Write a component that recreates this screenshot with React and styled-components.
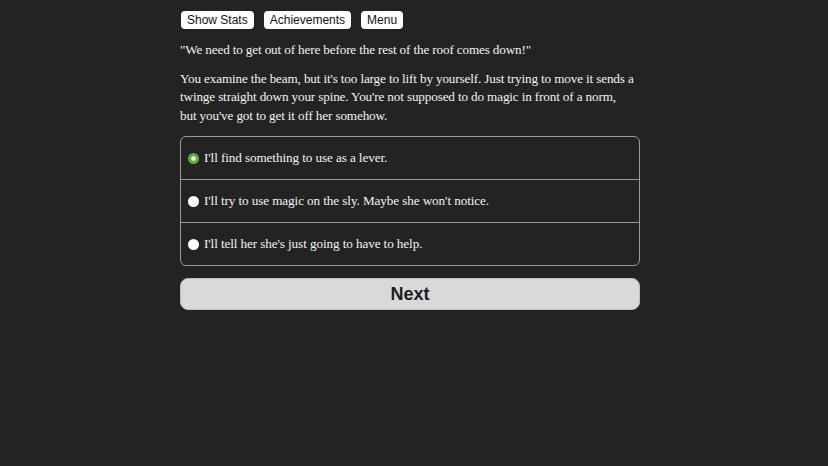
import React, { useState } from "react";
import styled, { createGlobalStyle } from "styled-components";

const GlobalStyle = createGlobalStyle`
  html, body {
    margin: 0;
    background: #232323;
  }
  body {
    font-family: "Liberation Serif", serif;
  }
`;

const choices = [
  "I'll find something to use as a lever.",
  "I'll try to use magic on the sly. Maybe she won't notice.",
  "I'll tell her she's just going to have to help.",
];

const App = () => {
  const [selected, setSelected] = useState(0);

  return (
    <>
      <GlobalStyle />
      <PageLayout>
        <Column>
          <Toolbar>
            <ToolButton>Show Stats</ToolButton>
            <ToolButton>Achievements</ToolButton>
            <ToolButton>Menu</ToolButton>
          </Toolbar>
          <Passage>
            "We need to get out of here before the rest of the roof comes down!"
          </Passage>
          <Passage>
            You examine the beam, but it's too large to lift by yourself. Just
            trying to move it sends a twinge straight down your spine. You're
            not supposed to do magic in front of a norm, but you've got to get
            it off her somehow.
          </Passage>
          <ChoiceList>
            {choices.map((text, i) => (
              <ChoiceRow key={i} onClick={() => setSelected(i)}>
                <Radio $checked={selected === i} />
                <span>{text}</span>
              </ChoiceRow>
            ))}
          </ChoiceList>
          <NextButton>Next</NextButton>
        </Column>
      </PageLayout>
    </>
  );
};

const PageLayout = styled.div`
  display: flex;
  justify-content: center;
  min-height: 466px;
  background: #232323;
`;

const Column = styled.div`
  width: 460px;
  margin-left: -8px;
  display: flex;
  flex-direction: column;
  padding-top: 11px;
  color: #f2f2f2;
`;

const Toolbar = styled.div`
  display: flex;
  gap: 10px;
  padding-left: 1px;
`;

const ToolButton = styled.button`
  height: 18px;
  padding: 0 6px;
  border: none;
  border-radius: 4px;
  background: #fff;
  color: #111;
  font-family: "Liberation Sans", Arial, sans-serif;
  font-size: 12px;
  line-height: 18px;
`;

const Passage = styled.p`
  margin: 12px 0 0;
  padding-right: 5px;
  font-size: 13.2px;
  letter-spacing: -0.15px;
  line-height: 18.5px;
  & + & {
    margin-top: 10px;
  }
`;

const ChoiceList = styled.div`
  margin-top: 11px;
  border: 1px solid #9a9a9a;
  border-radius: 6px;
  overflow: hidden;
`;

const ChoiceRow = styled.div`
  display: flex;
  align-items: center;
  gap: 5px;
  height: 42px;
  padding-left: 7px;
  font-size: 13.2px;
  letter-spacing: -0.1px;
  cursor: pointer;
  & + & {
    border-top: 1px solid #9a9a9a;
  }
`;

const Radio = styled.span`
  width: 11px;
  height: 11px;
  border-radius: 50%;
  flex-shrink: 0;
  background: ${(p) =>
    p.$checked ? "radial-gradient(circle, #e8f5dc 0 2px, #5fae3c 2.5px)" : "#fff"};
`;

const NextButton = styled.button`
  margin-top: 12px;
  height: 32px;
  border: 1px solid #bdbdbd;
  border-radius: 8px;
  background: #d9d9d9;
  color: #1e1e1e;
  font-family: "Liberation Sans", Arial, sans-serif;
  font-weight: bold;
  font-size: 18px;
`;

export default App;
